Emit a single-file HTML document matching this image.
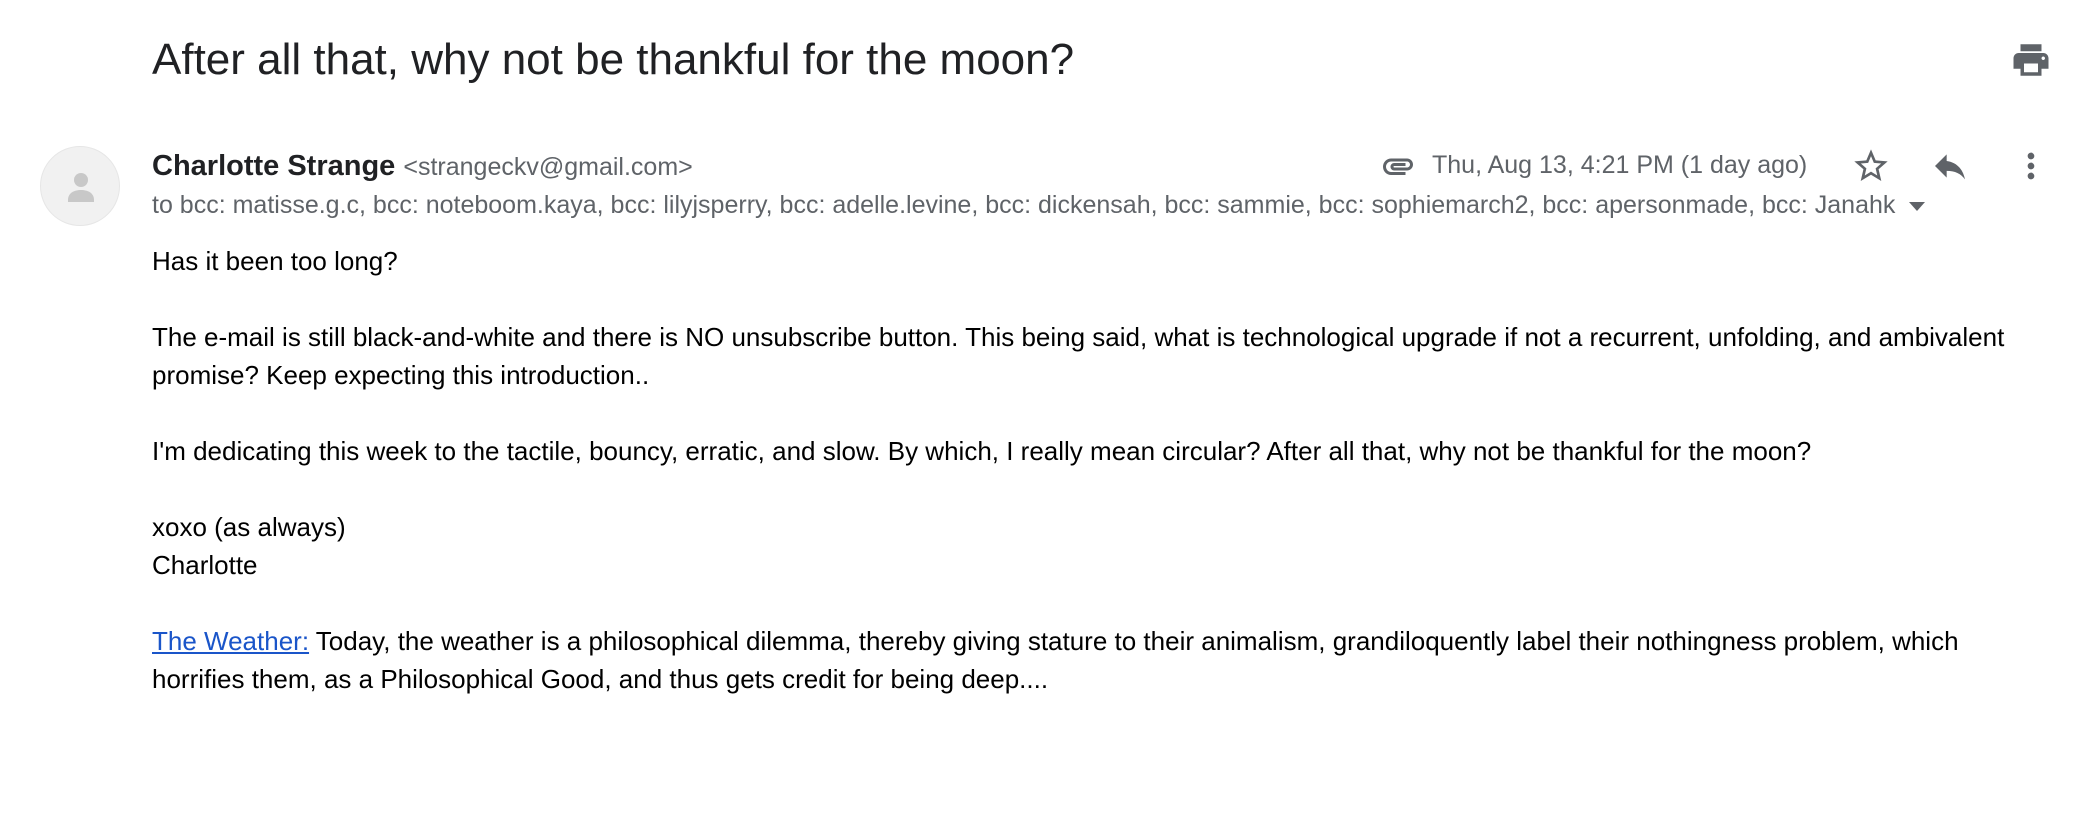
<!DOCTYPE html>
<html><head><meta charset="utf-8"><style>
*{margin:0;padding:0;box-sizing:border-box}
body{width:2078px;height:832px;background:#fff;font-family:"Liberation Sans",Arial,sans-serif;position:relative;overflow:hidden;color:#202124}
.abs{position:absolute;white-space:nowrap}
h1{position:absolute;left:152px;top:34px;font-size:44px;font-weight:400;color:#202124;line-height:52px;white-space:nowrap}
.av{position:absolute;left:40px;top:146px;width:80px;height:80px;border-radius:50%;background:#f1f1f1;border:1px solid #e6e6e6;overflow:hidden}
.name{left:152px;top:149px;font-size:29px;font-weight:700;line-height:34px}
.name span{font-weight:400;font-size:25px;color:#5f6368}
.to{left:152px;top:190px;font-size:25px;color:#5f6368;line-height:30px;width:1747px;overflow:hidden}
.date{left:1432px;top:150px;font-size:25px;color:#5f6368;line-height:30px}
.body{position:absolute;left:152px;top:242px;font-size:26px;line-height:38px;color:#000;width:1880px}
.body p{margin-bottom:38px}
a{color:#1a55c9;text-decoration:underline}
</style></head><body>
<h1>After all that, why not be thankful for the moon?</h1>
<svg class="abs" style="left:2010px;top:39px" width="42" height="42" viewBox="0 0 24 24"><path fill="#5f6368" d="M19 8H5c-1.66 0-3 1.34-3 3v6h4v4h12v-4h4v-6c0-1.66-1.34-3-3-3zm-3 11H8v-5h8v5zm3-7c-.55 0-1-.45-1-1s.45-1 1-1 1 .45 1 1-.45 1-1 1zm-1-9H6v4h12V3z"/></svg>
<div class="av"><svg width="80" height="80" viewBox="0 0 80 80"><circle cx="40" cy="33" r="7" fill="#c8c8c8"/><path d="M27 53c0-7 6-10 13-10s13 3 13 10v2H27z" fill="#c8c8c8"/></svg></div>
<div class="abs name">Charlotte Strange <span>&lt;strangeckv@gmail.com&gt;</span></div>
<div class="abs to">to bcc: matisse.g.c, bcc: noteboom.kaya, bcc: lilyjsperry, bcc: adelle.levine, bcc: dickensah, bcc: sammie, bcc: sophiemarch2, bcc: apersonmade, bcc: Janahk</div>
<svg class="abs" style="left:1906px;top:200px" width="22" height="12" viewBox="0 0 22 12"><path d="M3 2h16l-8 9z" fill="#5f6368"/></svg>
<svg class="abs" style="left:1378px;top:148px" width="40" height="36" viewBox="0 0 24 24"><path fill="#5f6368" d="M2 12.5C2 9.46 4.46 7 7.5 7H18c2.21 0 4 1.79 4 4s-1.79 4-4 4H9.5C8.12 15 7 13.88 7 12.5S8.12 10 9.5 10H17v2H9.41c-.55 0-.55 1 0 1H18c1.1 0 2-.9 2-2s-.9-2-2-2H7.5C5.57 9 4 10.57 4 12.5S5.57 16 7.5 16H17v2H7.5C4.46 18 2 15.54 2 12.5z"/></svg>
<div class="abs date">Thu, Aug 13, 4:21 PM (1 day ago)</div>
<svg class="abs" style="left:1851px;top:146px" width="40" height="40" viewBox="0 0 24 24"><path fill="#5f6368" d="M22 9.24l-7.19-.62L12 2 9.19 8.63 2 9.24l5.46 4.73L5.82 21 12 17.27 18.18 21l-1.63-7.03L22 9.24zM12 15.4l-3.76 2.27 1-4.28-3.32-2.88 4.38-.38L12 6.1l1.71 4.04 4.38.38-3.32 2.88 1 4.28L12 15.4z"/></svg>
<svg class="abs" style="left:1930px;top:146px" width="40" height="40" viewBox="0 0 24 24"><path fill="#5f6368" d="M10 9V5l-7 7 7 7v-4.1c5 0 8.5 1.6 11 5.1-1-5-4-10-11-11z"/></svg>
<svg class="abs" style="left:2011px;top:146px" width="40" height="40" viewBox="0 0 24 24"><path fill="#5f6368" d="M12 8c1.1 0 2-.9 2-2s-.9-2-2-2-2 .9-2 2 .9 2 2 2zm0 2c-1.1 0-2 .9-2 2s.9 2 2 2 2-.9 2-2-.9-2-2-2zm0 6c-1.1 0-2 .9-2 2s.9 2 2 2 2-.9 2-2-.9-2-2-2z"/></svg>
<div class="body">
<p>Has it been too long?</p>
<p>The e-mail is still black-and-white and there is NO unsubscribe button. This being said, what is technological upgrade if not a recurrent, unfolding, and ambivalent promise? Keep expecting this introduction..</p>
<p>I'm dedicating this week to the tactile, bouncy, erratic, and slow. By which, I really mean circular? After all that, why not be thankful for the moon?</p>
<p>xoxo (as always)<br>Charlotte</p>
<p><a>The Weather:</a> Today, the weather is a philosophical dilemma, thereby giving stature to their animalism, grandiloquently label their nothingness problem, which horrifies them, as a Philosophical Good, and thus gets credit for being deep....</p>
</div>
</body></html>
